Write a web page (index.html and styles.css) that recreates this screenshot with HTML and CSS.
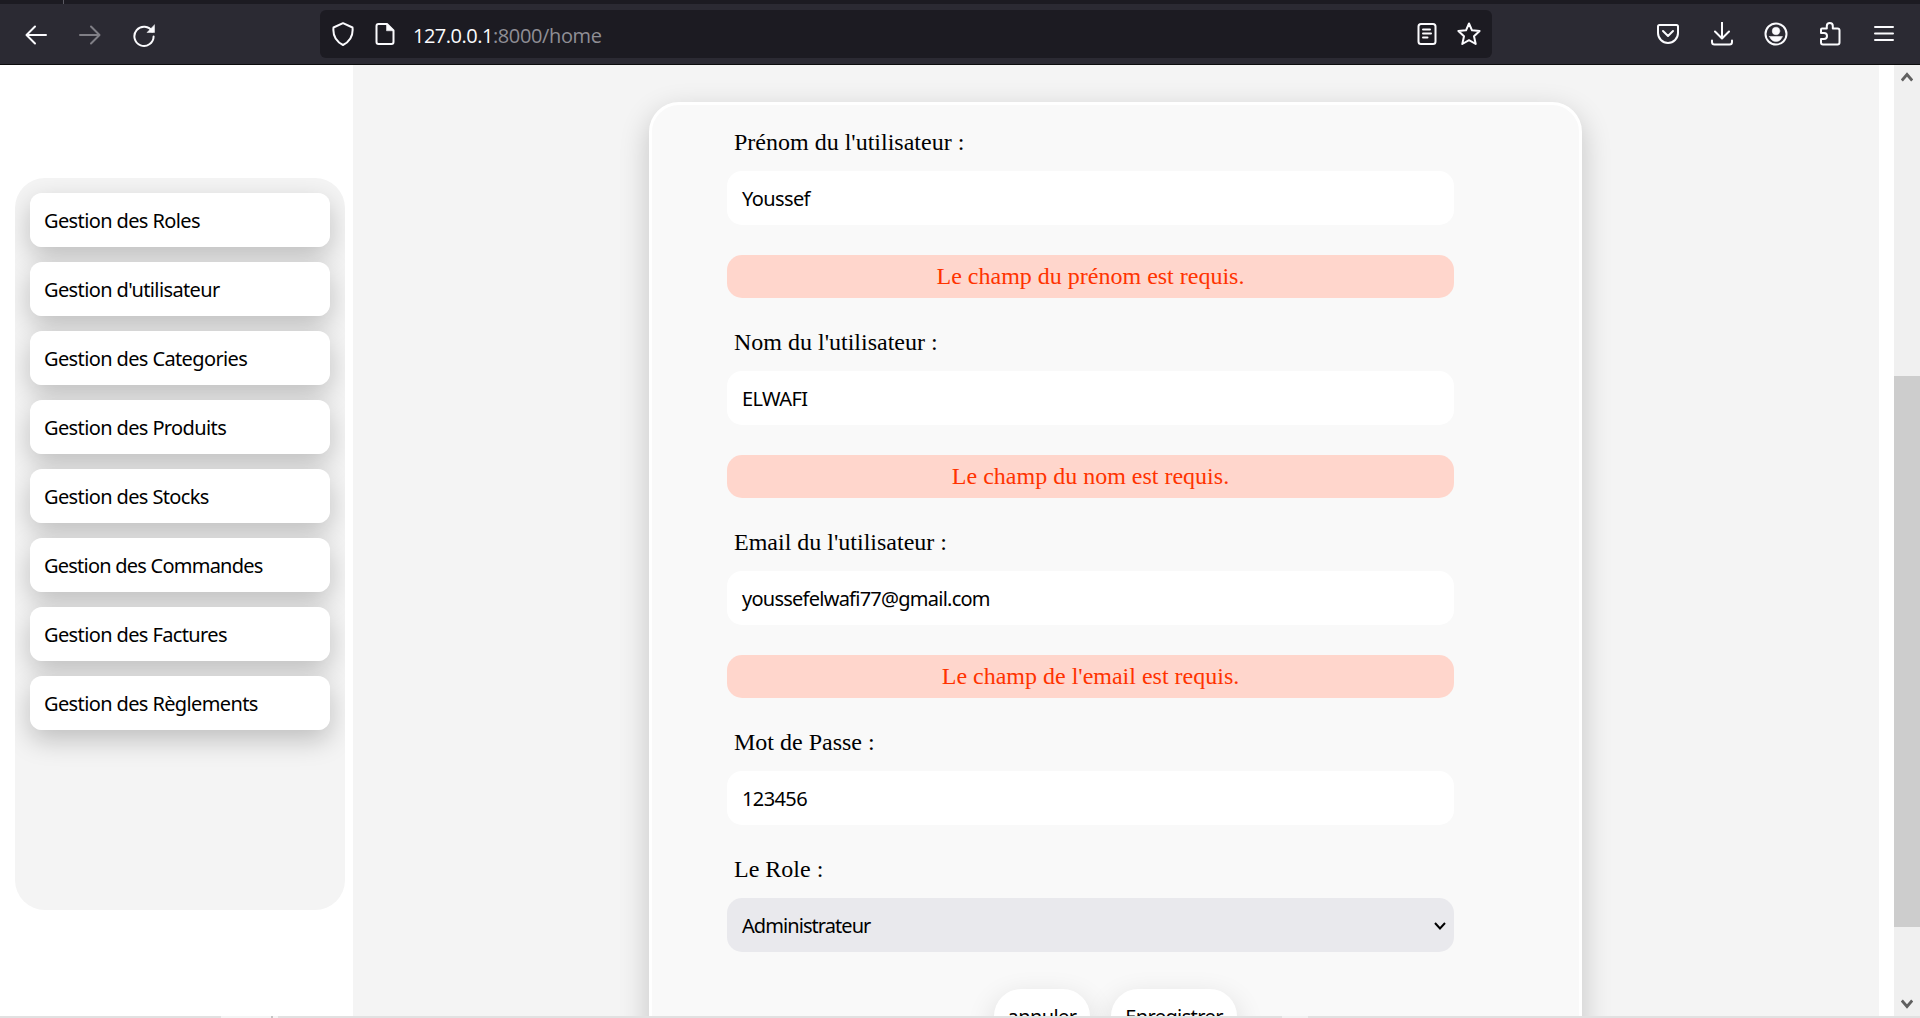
FILE: index.html
```html
<!DOCTYPE html>
<html lang="fr">
<head>
<meta charset="utf-8">
<title>Gestion d'utilisateur</title>
<link rel="stylesheet" href="styles.css">
</head>
<body>
<div class="tabstrip"><span class="tab-edge"></span></div>
<header class="toolbar">
  <nav class="nav-buttons">
    <svg class="icon" viewBox="0 0 24 24"><path d="M22 12H3M11 3.500L2.500 12L11 20.500"/></svg>
    <svg class="icon dim" viewBox="0 0 24 24"><path d="M2 12H21M13 3.500L21.500 12L13 20.500"/></svg>
    <svg class="icon" viewBox="0 0 24 24"><path d="M20.300 8.500A9.600 9.600 0 1 0 21.600 13.500"/><path class="solid" d="M22.500 2V9.500H15L18.500 6Z"/></svg>
  </nav>
  <div class="urlbar">
    <svg class="icon" viewBox="0 0 24 24"><path d="M12 1.200L21.500 5.500C22.300 13 19 19.500 12 23C5 19.500 1.700 13 2.500 5.500Z"/></svg>
    <svg class="icon page" viewBox="0 0 24 24"><path d="M5.500 2H14L20.500 8.500V20Q20.500 22 18.500 22H5.500Q3.500 22 3.500 20V4Q3.500 2 5.500 2Z"/><path class="solid" d="M13.500 2V8.800H20.500Z"/></svg>
    <span class="url"><b>127.0.0.1</b>:8000/home</span>
    <svg class="icon reader" viewBox="0 0 24 24"><rect x="3.500" y="2" width="17" height="20" rx="2.500"/><path d="M8 7.500H15M8 11.500H16M8 15.500H12.500"/></svg>
    <svg class="icon" viewBox="0 0 24 24"><path d="M12 1.500L15 8.300L22.600 9L17 14.300L18.700 22L12 18.200L5.300 22L7 14.300L1.400 9L9 8.300Z"/></svg>
  </div>
  <div class="tools">
    <svg class="icon" viewBox="0 0 24 24"><path d="M3.500 3H20.500Q22 3 22 4.500V11A10 10 0 0 1 2 11V4.500Q2 3 3.500 3ZM7 9L12 14L17 9"/></svg>
    <svg class="icon" viewBox="0 0 24 24"><path d="M12 0.500V16M5 9.500L12 16.500L19 9.500M2 18.500V20Q2 22.500 4.500 22.500H19.500Q22 22.500 22 20V18.500"/></svg>
    <svg class="icon" viewBox="0 0 24 24"><circle cx="12" cy="12" r="10.500"/><circle class="solid" cx="12" cy="9" r="3.800"/><path class="solid" d="M5.500 14.500H18.500Q16.500 19.500 12 19.500T5.500 14.500Z"/></svg>
    <svg class="icon" viewBox="0 0 24 24"><path d="M4 6.500H8.800V4A3 3 0 0 1 14.800 4V6.500H19.500Q21.500 6.500 21.500 8.500V20.500Q21.500 22.500 19.500 22.500H5Q3 22.500 3 20.500V17H6A3 3 0 0 0 6 11H3V7.500Q3 6.500 4 6.500Z"/></svg>
    <svg class="icon" viewBox="0 0 24 24"><path d="M3 5H21M3 11.500H21M3 18H21"/></svg>
  </div>
</header>

<div class="viewport">
  <aside class="sidebar">
    <ul class="menu">
      <li><a>Gestion des Roles</a></li>
      <li><a>Gestion d'utilisateur</a></li>
      <li><a>Gestion des Categories</a></li>
      <li><a>Gestion des Produits</a></li>
      <li><a>Gestion des Stocks</a></li>
      <li><a class="tight">Gestion des Commandes</a></li>
      <li><a>Gestion des Factures</a></li>
      <li><a>Gestion des Règlements</a></li>
    </ul>
  </aside>
  <main class="content">
    <form class="card">
      <label>Prénom du l'utilisateur :</label>
      <div class="field">Youssef</div>
      <p class="error">Le champ du prénom est requis.</p>
      <label>Nom du l'utilisateur :</label>
      <div class="field">ELWAFI</div>
      <p class="error">Le champ du nom est requis.</p>
      <label>Email du l'utilisateur :</label>
      <div class="field email">youssefelwafi77@gmail.com</div>
      <p class="error">Le champ de l'email est requis.</p>
      <label>Mot de Passe :</label>
      <div class="field">123456</div>
      <label>Le Role :</label>
      <div class="field select">Administrateur
        <svg class="chevron" viewBox="0 0 12 8"><path d="M1 1L6 6.500L11 1"/></svg>
      </div>
      <div class="actions">
        <button type="button" class="cancel">annuler</button>
        <button type="button" class="save">Enregistrer</button>
      </div>
    </form>
  </main>
  <div class="scrollbar">
    <svg class="arrow" viewBox="0 0 12 10"><path d="M0.800 8.500L6 2.500L11.200 8.500"/></svg>
    <div class="thumb"></div>
    <svg class="arrow" viewBox="0 0 12 10"><path d="M0.800 1.500L6 7.500L11.200 1.500"/></svg>
  </div>
</div>
<footer class="edge"><i class="edge-a"></i><i class="edge-b"></i><i class="edge-c"></i><i class="edge-d"></i></footer>
</body>
</html>
```

FILE: styles.css
```css
* { box-sizing: border-box; }
body {
  margin: 0;
  width: 1920px;
  height: 1018px;
  overflow: hidden;
  display: flex;
  flex-direction: column;
  background: #fff;
  color: #000;
  font-family: "Noto Sans", sans-serif;
}

/* Browser chrome */
.tabstrip { height: 4px; flex: none; background: #1c1b22; padding-left: 63px; display: flex; }
.tab-edge { width: 1px; background: #5b5a63; }
.toolbar {
  height: 61px;
  flex: none;
  display: flex;
  align-items: center;
  background: #2b2a33;
  border-bottom: 1px solid #0c0c0d;
}
.nav-buttons { width: 320px; padding: 1px 0 0 24px; display: flex; gap: 30px; }
.icon {
  width: 24px;
  height: 24px;
  flex: none;
  fill: none;
  stroke: #fbfbfe;
  stroke-width: 2;
  stroke-linecap: round;
  stroke-linejoin: round;
}
.icon.dim { stroke: #807f86; }
.icon .solid { fill: #fbfbfe; stroke-width: 0.5; }
.urlbar {
  width: 1172px;
  height: 48px;
  padding: 0 11px;
  display: flex;
  align-items: center;
  background: #1c1b22;
  border-radius: 6px;
}
.page { margin-left: 18px; }
.url {
  margin: 4px 0 0 16px;
  flex: 1;
  font: 20px/28px "Open Sans", sans-serif;
  letter-spacing: -0.36px;
  color: #8f8e95;
}
.url b { font-weight: 400; color: #fbfbfe; letter-spacing: -0.5px; }
.reader { margin-right: 18px; }
.tools { flex: 1; padding: 0 24px 0 164px; display: flex; justify-content: space-between; }

/* Page */
.viewport { height: 951px; flex: none; display: flex; overflow: hidden; }
.sidebar { width: 353px; flex: none; padding: 113px 8px 0 15px; }
.menu {
  margin: 0;
  padding: 15px;
  height: 732px;
  list-style: none;
  display: flex;
  flex-direction: column;
  gap: 15px;
  background: #f4f4f4;
  border-radius: 30px;
  overflow: hidden;
}
.menu li { height: 54px; flex: none; border-radius: 12px; box-shadow: 0 10px 27px rgba(0, 0, 0, 0.22); }
.menu a {
  position: relative;
  z-index: 1;
  display: block;
  height: 54px;
  padding-left: 14px;
  border-radius: 12px;
  background: #fff;
  font-size: 20px;
  line-height: 56px;
  letter-spacing: -0.62px;
}
.menu .tight { letter-spacing: -0.77px; }
.content { width: 1526px; flex: none; padding: 37px 0 0 296px; background: #f4f4f4; overflow: hidden; }
.card {
  width: 933px;
  height: 990px;
  padding: 23px 125px 0 75px;
  border: 3px solid #fff;
  border-radius: 30px;
  background: #f9f9f9;
  box-shadow: 0 10px 30px rgba(0, 0, 0, 0.2);
}
label {
  display: block;
  height: 43px;
  padding-left: 7px;
  font: 24px/28px "Liberation Serif", serif;
}
.field {
  height: 54px;
  margin-bottom: 30px;
  padding: 0 8px 0 15px;
  border-radius: 15px;
  background: #fff;
  font-size: 20px;
  line-height: 56px;
  letter-spacing: -0.6px;
}
.email { letter-spacing: -0.75px; }
.error {
  height: 43px;
  margin: 0 0 30px;
  border-radius: 15px;
  background: #ffd6cc;
  color: #ff3300;
  text-align: center;
  font: 24px/43px "Liberation Serif", serif;
}
.select {
  display: flex;
  align-items: center;
  justify-content: space-between;
  background: #e9e9ed;
  line-height: 54px;
  padding-top: 2px;
  letter-spacing: -0.93px;
}
.chevron { width: 12px; height: 8px; fill: none; stroke: #000; stroke-width: 2; }
.actions { margin-top: 37px; padding-left: 267px; display: flex; gap: 21px; }
.actions button {
  height: 54px;
  padding: 0;
  border: 0;
  border-radius: 27px;
  background: #fff;
  color: #000;
  font: 20px/56px "Noto Sans", sans-serif;
  letter-spacing: -0.6px;
  box-shadow: 0 10px 30px rgba(0, 0, 0, 0.14);
}
.actions .cancel { width: 96px; }
.actions .save { width: 126px; }
.scrollbar {
  width: 26px;
  margin-left: 15px;
  padding: 7px 0;
  display: flex;
  flex-direction: column;
  align-items: center;
  justify-content: space-between;
  background: #f0f0f0;
}
.arrow { width: 12px; height: 10px; fill: none; stroke: #606060; stroke-width: 2.800; }
.thumb { width: 26px; height: 551px; margin-top: 222px; background: #cdcdcd; }

/* Bottom window edge */
.edge { height: 2px; flex: none; display: flex; background: #e1e1e1; padding-left: 221px; }
.edge-a { width: 50px; background: #f4f4f4; }
.edge-b { width: 2px; background: #c4c4c4; }
.edge-c { width: 5px; background: #f4f4f4; }
.edge-d { width: 26px; margin-left: 1004px; background: #f1f1f1; }
```
